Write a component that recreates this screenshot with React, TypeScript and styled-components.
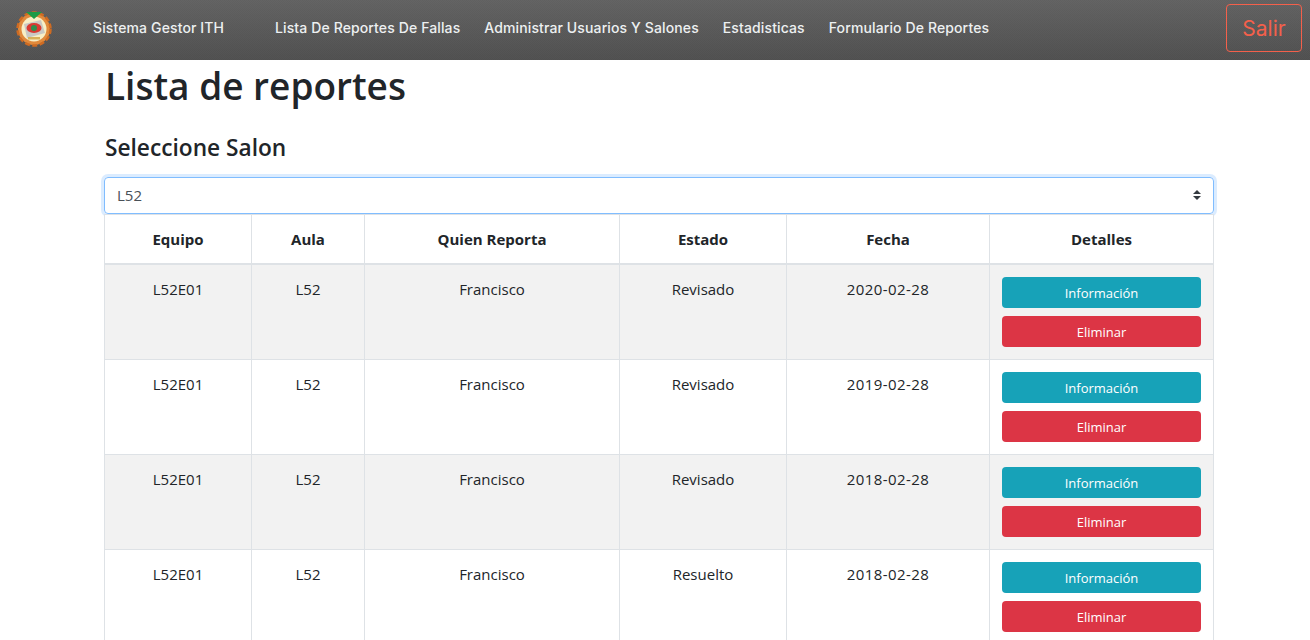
import React from 'react';
import styled, { createGlobalStyle } from 'styled-components';

interface Reporte {
  equipo: string;
  aula: string;
  quien: string;
  estado: string;
  fecha: string;
}

const reportes: Reporte[] = [
  { equipo: 'L52E01', aula: 'L52', quien: 'Francisco', estado: 'Revisado', fecha: '2020-02-28' },
  { equipo: 'L52E01', aula: 'L52', quien: 'Francisco', estado: 'Revisado', fecha: '2019-02-28' },
  { equipo: 'L52E01', aula: 'L52', quien: 'Francisco', estado: 'Revisado', fecha: '2018-02-28' },
  { equipo: 'L52E01', aula: 'L52', quien: 'Francisco', estado: 'Resuelto', fecha: '2018-02-28' },
];

const columnas = ['Equipo', 'Aula', 'Quien Reporta', 'Estado', 'Fecha', 'Detalles'];
const enlaces = ['Lista De Reportes De Fallas', 'Administrar Usuarios Y Salones', 'Estadisticas', 'Formulario De Reportes'];

const GlobalStyle = createGlobalStyle`
  html, body {
    margin: 0;
    height: 640px;
    overflow: hidden;
    background: #fff;
    font-family: "Open Sans", "Noto Sans", sans-serif;
    color: #212529;
  }
  * { box-sizing: border-box; }
`;

const Navbar = styled.nav`
  height: 60px;
  display: flex;
  align-items: center;
  padding: 0 8px 4px 16px;
  background:
    repeating-conic-gradient(rgba(255, 255, 255, 0.012) 0 25%, rgba(0, 0, 0, 0.012) 0 50%) 0 0 / 2px 2px,
    linear-gradient(180deg, #626262 0%, #505050 100%);
`;

const Brand = styled.div`
  display: flex;
  align-items: center;
  width: 259px;
  gap: 41px;
`;

const NavText = styled.a`
  display: block;
  padding-bottom: 2px;
  font-family: Inter, Lato, sans-serif;
  font-size: 14px;
  font-weight: 500;
  letter-spacing: 0.12px;
  color: #edf0f1;
  white-space: nowrap;
`;

const NavLinks = styled.div`
  display: flex;
  gap: 24px;
  flex: 1;
`;

const SalirButton = styled.button`
  width: 76px;
  height: 48px;
  border: 1px solid #f4604b;
  border-radius: 4px;
  background: transparent;
  color: #f4604b;
  font-family: Inter, Lato, sans-serif;
  font-size: 21px;
`;

const Main = styled.main`
  width: 1110px;
  margin-left: 104px;
`;

const Title = styled.h1`
  margin: 0 0 0 1px;
  font-size: 37px;
  line-height: 52px;
  font-weight: 600;
`;

const Subtitle = styled.h4`
  margin: 20px 0 0 1px;
  font-size: 22.7px;
  line-height: 32px;
  font-weight: 600;
`;

const SelectBox = styled.div`
  height: 37px;
  margin-top: 13px;
  display: flex;
  align-items: center;
  justify-content: space-between;
  padding: 0 12px 2px 12px;
  border: 1px solid #80bdff;
  border-radius: 4px;
  box-shadow: 0 0 0 3px rgba(0, 123, 255, 0.14);
  font-size: 15px;
  color: #495057;
`;

const Table = styled.table`
  width: 1109px;
  table-layout: fixed;
  border-collapse: collapse;
  font-size: 15px;
`;

const HeadCell = styled.th`
  height: 49px;
  padding: 0;
  border: 1px solid #dee2e6;
  border-bottom-width: 2px;
  text-align: center;
  font-weight: 700;
  background: #fff;
`;

const Row = styled.tr<{ $striped: boolean }>`
  background: ${(p) => (p.$striped ? '#f2f2f2' : '#fff')};
`;

const Cell = styled.td`
  height: 95px;
  padding: 12px;
  border: 1px solid #dee2e6;
  text-align: center;
  vertical-align: top;
  line-height: 24px;
`;

const DateCell = styled(Cell)`
  letter-spacing: 0.4px;
`;

const ActionButton = styled.button<{ $color: string }>`
  display: block;
  width: 100%;
  height: 31px;
  padding: 1px 0 0;
  border: 0;
  border-radius: 4px;
  background: ${(p) => p.$color};
  color: #fff;
  font-family: inherit;
  font-size: 13px;
  & + & {
    margin-top: 8px;
  }
`;

function Logo() {
  return (
    <svg width="36" height="38" viewBox="0 0 36 38">
      <circle cx="18" cy="20" r="16" fill="#e08a3c" />
      <circle cx="18" cy="20" r="16.5" fill="none" stroke="#cf6b22" strokeWidth="2.5" strokeDasharray="5 2.5" />
      <circle cx="18" cy="20" r="12.5" fill="#f8efc6" />
      <path d="M8 15 L25 11 L29 24 L11 29 Z" fill="#c9c9c4" />
      <ellipse cx="18" cy="19" rx="7.5" ry="5" fill="#d93a33" />
      <circle cx="18" cy="19" r="3" fill="#2f8f4e" />
      <path d="M10 3 L26 3 L18 10 Z" fill="#1c9a46" />
      <rect x="12" y="28" width="12" height="2.5" fill="#d8b15a" />
    </svg>
  );
}

function SortArrows() {
  return (
    <svg width="8" height="10" viewBox="0 0 8 10">
      <path d="M4 0 L8 4 L0 4 Z M4 10 L0 6 L8 6 Z" fill="#343a40" />
    </svg>
  );
}

export default function App() {
  return (
    <>
      <GlobalStyle />
      <Navbar>
        <Brand>
          <Logo />
          <NavText>Sistema Gestor ITH</NavText>
        </Brand>
        <NavLinks>
          {enlaces.map((e) => (
            <NavText key={e}>{e}</NavText>
          ))}
        </NavLinks>
        <SalirButton>Salir</SalirButton>
      </Navbar>
      <Main>
        <Title>Lista de reportes</Title>
        <Subtitle>Seleccione Salon</Subtitle>
        <SelectBox>
          L52
          <SortArrows />
        </SelectBox>
        <Table>
          <colgroup>
            {[147, 113, 255, 167, 203, 224].map((w, i) => (
              <col key={i} width={w} />
            ))}
          </colgroup>
          <thead>
            <tr>
              {columnas.map((c) => (
                <HeadCell key={c}>{c}</HeadCell>
              ))}
            </tr>
          </thead>
          <tbody>
            {reportes.map((r, i) => (
              <Row key={i} $striped={i % 2 === 0}>
                <Cell>{r.equipo}</Cell>
                <Cell>{r.aula}</Cell>
                <Cell>{r.quien}</Cell>
                <Cell>{r.estado}</Cell>
                <DateCell>{r.fecha}</DateCell>
                <Cell>
                  <ActionButton $color="#17a2b8">Información</ActionButton>
                  <ActionButton $color="#dc3545">Eliminar</ActionButton>
                </Cell>
              </Row>
            ))}
          </tbody>
        </Table>
      </Main>
    </>
  );
}
